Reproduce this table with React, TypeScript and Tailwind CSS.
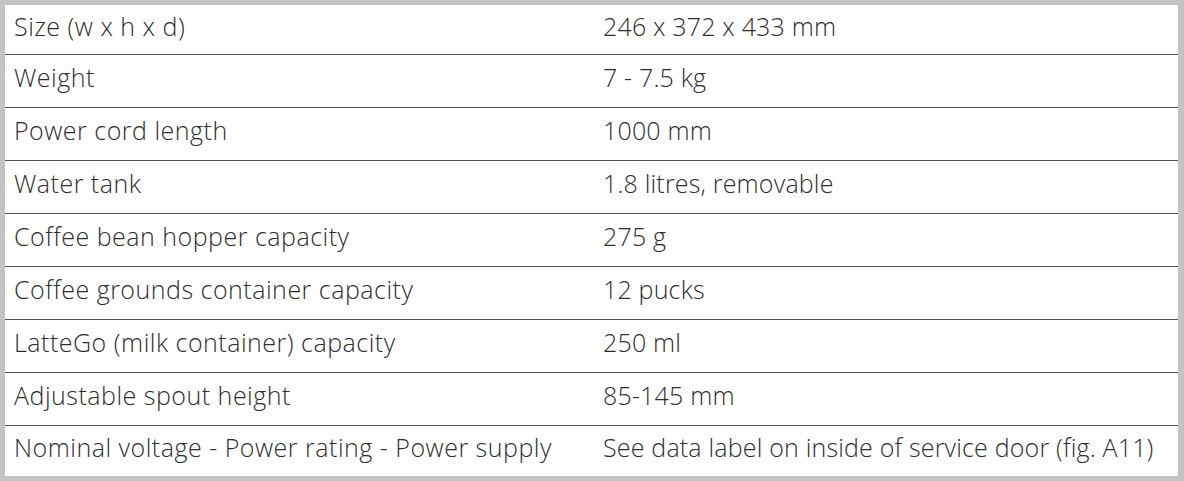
const rows: [string, string][] = [
  ['Size (w x h x d)', '246 x 372 x 433 mm'],
  ['Weight', '7 - 7.5 kg'],
  ['Power cord length', '1000 mm'],
  ['Water tank', '1.8 litres, removable'],
  ['Coffee bean hopper capacity', '275 g'],
  ['Coffee grounds container capacity', '12 pucks'],
  ['LatteGo (milk container) capacity', '250 ml'],
  ['Adjustable spout height', '85-145 mm'],
  ['Nominal voltage - Power rating - Power supply', 'See data label on inside of service door (fig. A11)'],
];

export default function App() {
  return (
    <div className="w-[1184px] h-[481px] bg-[#c3c3c3] pt-[5px] pl-[5px] pr-[6px] pb-[5px] font-['Open_Sans',sans-serif] font-light">
      <div className="h-full bg-white flex flex-col">
        {rows.map(([label, value], i) => (
          <div
            key={label}
            className={`flex items-center text-[25px] leading-[30px] text-[#2e2e2e] ${i === 0 ? 'h-[49px]' : i === rows.length - 1 ? 'h-[51px]' : 'h-[53px] border-t border-[#555]'} ${i === rows.length - 1 ? 'border-t border-[#555]' : ''}`}
          >
            <div className="w-[598px] pl-[9px] pb-[8px] whitespace-nowrap tracking-[0.5px]">{label}</div>
            <div className="flex-1 pb-[8px] whitespace-nowrap tracking-[0.18px]">{value}</div>
          </div>
        ))}
      </div>
    </div>
  );
}
